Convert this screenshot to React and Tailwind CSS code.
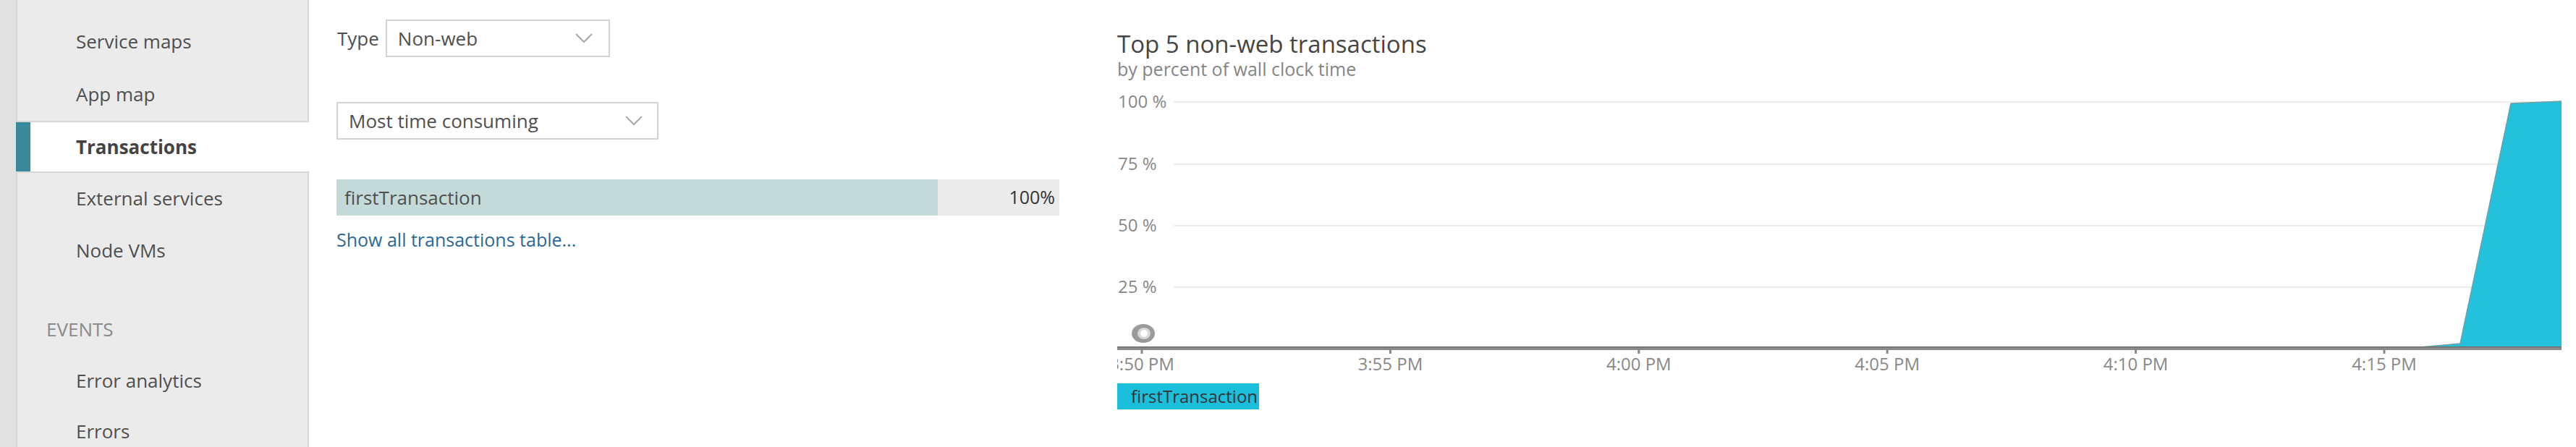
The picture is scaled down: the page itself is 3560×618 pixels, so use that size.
import React from "react";

const NAV_TOP = [
  { label: "Service maps", h: "h-[72px]" },
  { label: "App map", h: "h-[74px]" },
];

const NAV_AFTER = [
  { label: "External services", h: "h-[70px]" },
  { label: "Node VMs", h: "h-[74px]" },
];

const EVENTS = ["Error analytics", "Errors"];

const TICKS = ["3:50 PM", "3:55 PM", "4:00 PM", "4:05 PM", "4:10 PM", "4:15 PM"];
const GRID = [
  { label: "100 %", y: 21 },
  { label: "75 %", y: 107 },
  { label: "50 %", y: 192 },
  { label: "25 %", y: 277 },
];

function Chevron() {
  return (
    <svg width="24" height="14" viewBox="0 0 24 14" className="shrink-0">
      <polyline points="1,1 12,12 23,1" fill="none" stroke="#a8a8a8" strokeWidth="2" />
    </svg>
  );
}

function Select({ value, className }) {
  return (
    <div className={"flex items-center justify-between border-2 border-[#d3d3d3] bg-white " + className}>
      <span>{value}</span>
      <Chevron />
    </div>
  );
}

function Sidebar() {
  return (
    <div className="flex h-full shrink-0">
      <div className="h-full w-[22px] bg-[#e1e1e1]" />
      <nav className="h-full w-[405px] border-r-2 border-l-2 border-[#d6d6d6] bg-[#ebebeb] pt-[21px] text-[26px] text-[#4f4f4f]">
        {NAV_TOP.map((item) => (
          <div key={item.label} className={"flex items-center pl-[81px] " + item.h}>
            {item.label}
          </div>
        ))}
        <div className="-ml-[2px] -mr-[2px] flex h-[72px] items-center border-y-2 border-[#d6d6d6] bg-white">
          <div className="h-full w-[20px] bg-[#378a9a]" />
          <span className="pl-[63px] font-bold text-[#444]">Transactions</span>
        </div>
        {NAV_AFTER.map((item) => (
          <div key={item.label} className={"flex items-center pl-[81px] " + item.h}>
            {item.label}
          </div>
        ))}
        <div className="mt-[36px] flex h-[72px] items-center pl-[40px] uppercase text-[#8a8a8a]">Events</div>
        {EVENTS.map((label) => (
          <div key={label} className="flex h-[70px] items-center pl-[81px]">
            {label}
          </div>
        ))}
      </nav>
    </div>
  );
}

function TransactionList() {
  return (
    <div className="w-[999px] shrink-0 pt-[27px] text-[26px] text-[#4f4f4f]">
      <div className="flex items-center gap-[9px]">
        <span className="pl-[1px]">Type</span>
        <Select value="Non-web" className="h-[52px] w-[310px] pl-[15px] pr-[22px]" />
      </div>
      <Select value="Most time consuming" className="mt-[62px] h-[52px] w-[445px] pl-[15px] pr-[20px]" />
      <div className="mt-[55px] flex h-[50px] bg-[#ebebeb]">
        <div className="flex w-[831px] items-center bg-[#c4dad9] pl-[11px]">firstTransaction</div>
        <div className="flex flex-1 items-center justify-end pr-[6px] text-[25px] text-[#333]">100%</div>
      </div>
      <a className="mt-[19px] block text-[25px] leading-[28px] text-[#2b6896]">Show all transactions table...</a>
    </div>
  );
}

function Chart() {
  return (
    <div className="w-[1996px] shrink-0 pt-[41px]">
      <h2 className="text-[33px] leading-[40px] text-[#454545]">Top 5 non-web transactions</h2>
      <p className="text-[25px] leading-[28px] text-[#858585]">by percent of wall clock time</p>
      <svg width="1996" height="400" viewBox="0 0 1996 400" className="mt-[11px] block font-['Open_Sans',sans-serif]">
        {GRID.map((g) => (
          <g key={g.label}>
            <line x1="78" x2="1996" y1={g.y} y2={g.y} stroke="#ececec" strokeWidth="2" />
            <text x="1" y={g.y + 8} fontSize="24" fill="#888">
              {g.label}
            </text>
          </g>
        ))}
        <polygon points="1790,361 1856,355 1926,23 1996,20 1996,361" fill="#24c1dd" />
        <polyline points="1790,361 1856,355 1926,23 1996,20" fill="none" stroke="#6f9ea6" strokeWidth="1.5" />
        <rect x="0" y="360" width="1996" height="4" fill="#8a8a8a" />
        <rect x="0" y="359" width="1996" height="1.5" fill="#6e6e6e" />
        {TICKS.map((t, i) => {
          const x = 34 + i * 343.4;
          return (
            <g key={t}>
              <rect x={x - 1.5} y="364" width="3" height="5" fill="#888" />
              <text x={x} y="392" fontSize="24" fill="#888" textAnchor="middle">
                {t}
              </text>
            </g>
          );
        })}
        <ellipse cx="36" cy="341" rx="16" ry="13" fill="#9b9b9b" />
        <ellipse cx="37" cy="341" rx="9" ry="8" fill="#d8d8d8" />
        <ellipse cx="37" cy="341" rx="5" ry="5" fill="#fff" />
      </svg>
      <div className="mt-[10px] flex h-[36px] w-[196px] items-center bg-[#1bbfdb] pl-[19px] text-[24px] text-[#333]">
        firstTransaction
      </div>
    </div>
  );
}

export default function App() {
  return (
    <div className="flex h-[618px] w-[3560px] overflow-hidden bg-white font-['Open_Sans',sans-serif]">
      <Sidebar />
      <div className="flex gap-[80px] pl-[38px]">
        <TransactionList />
        <Chart />
      </div>
    </div>
  );
}
